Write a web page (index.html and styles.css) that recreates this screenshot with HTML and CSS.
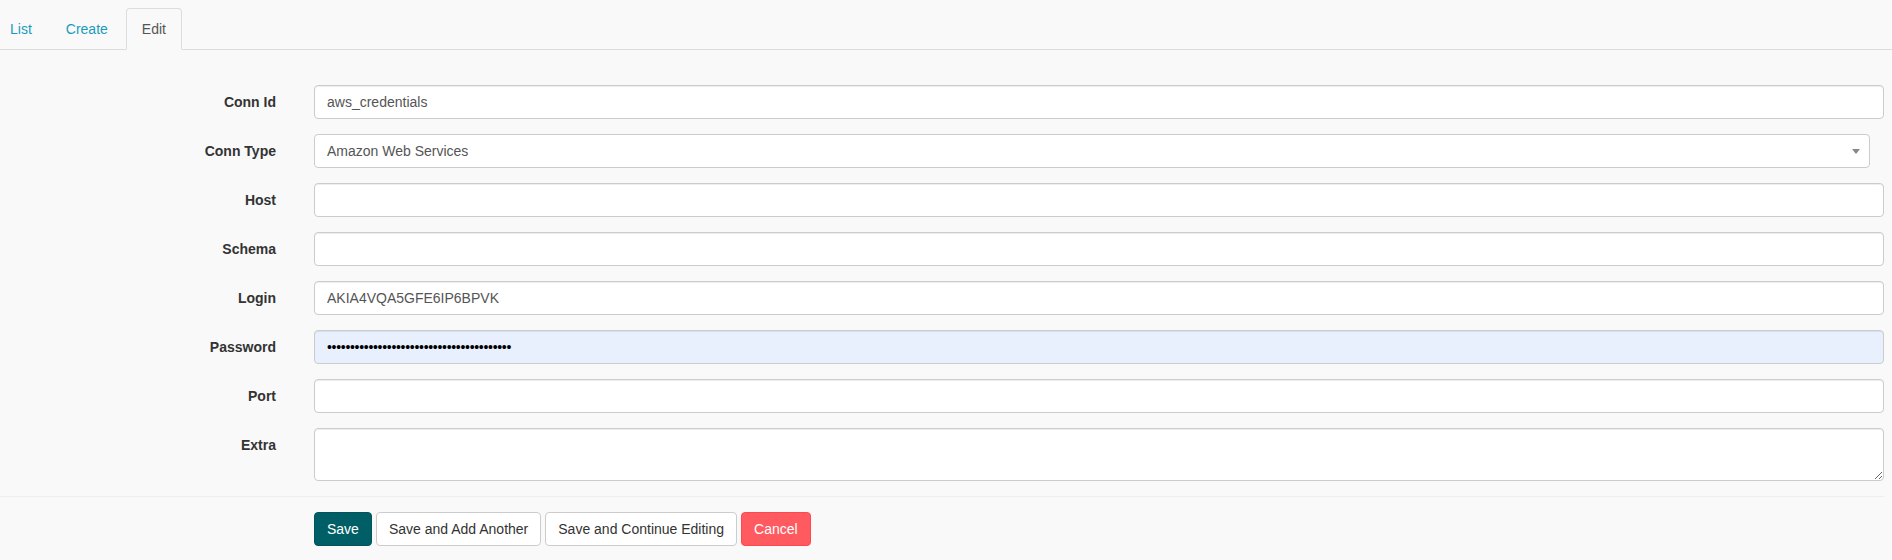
FILE: index.html
```html
<!DOCTYPE html>
<html>
<head>
<meta charset="utf-8">
<link rel="stylesheet" href="styles.css">
</head>
<body>
<ul class="tabs">
  <li class="tab"><a href="#">List</a></li>
  <li class="tab"><a href="#">Create</a></li>
  <li class="tab active"><a href="#">Edit</a></li>
</ul>
<form class="form">
  <div class="row">
    <label class="label">Conn Id</label>
    <input class="control" type="text" value="aws_credentials">
  </div>
  <div class="row">
    <label class="label">Conn Type</label>
    <div class="select">
      <span class="select-text">Amazon Web Services</span>
      <span class="arrow"></span>
    </div>
  </div>
  <div class="row">
    <label class="label">Host</label>
    <input class="control" type="text" value="">
  </div>
  <div class="row">
    <label class="label">Schema</label>
    <input class="control" type="text" value="">
  </div>
  <div class="row">
    <label class="label">Login</label>
    <input class="control" type="text" value="AKIA4VQA5GFE6IP6BPVK">
  </div>
  <div class="row">
    <label class="label">Password</label>
    <input class="control autofill" type="password" value="xxxxxxxxxxxxxxxxxxxxxxxxxxxxxxxxxxxxxxxx">
  </div>
  <div class="row">
    <label class="label">Port</label>
    <input class="control" type="text" value="">
  </div>
  <div class="row">
    <label class="label">Extra</label>
    <textarea class="control textarea"></textarea>
  </div>
  <hr class="divider">
  <div class="actions">
    <button type="button" class="btn btn-primary">Save</button>
    <button type="button" class="btn">Save and Add Another</button>
    <button type="button" class="btn">Save and Continue Editing</button>
    <button type="button" class="btn btn-danger">Cancel</button>
  </div>
</form>
</body>
</html>
```
FILE: styles.css
```css
* { box-sizing: border-box; }
html, body {
  margin: 0;
  padding: 0;
  background: #f9f9f9;
  font-family: "Liberation Sans", Arial, Helvetica, sans-serif;
  font-size: 14px;
  line-height: 20px;
  color: #333;
}
.tabs {
  list-style: none;
  margin: 8px 0 0 -6px;
  padding: 0;
  display: flex;
  border-bottom: 1px solid #ddd;
}
.tab {
  margin: 0 2px -1px 0;
}
.tab a {
  display: block;
  padding: 10px 15px;
  line-height: 20px;
  border: 1px solid transparent;
  border-radius: 4px 4px 0 0;
  color: #1a9bbd;
  text-decoration: none;
}
.tab.active a {
  color: #555;
  background: #f9f9f9;
  border-color: #ddd #ddd transparent #ddd;
}
.form {
  margin: 35px 8px 0 0;
}
.row {
  display: grid;
  grid-template-columns: 276px 1fr;
  column-gap: 38px;
  margin-bottom: 15px;
}
.label {
  font-weight: bold;
  text-align: right;
  padding-top: 7px;
  line-height: 20px;
  color: #333;
}
.control {
  display: block;
  width: 100%;
  height: 34px;
  padding: 6px 12px;
  font-family: "Liberation Sans", Arial, Helvetica, sans-serif;
  font-size: 14px;
  line-height: 20px;
  color: #555;
  background: #fff;
  border: 1px solid #ccc;
  border-radius: 4px;
  box-shadow: inset 0 1px 1px rgba(0,0,0,0.075);
  outline: none;
  margin: 0;
}
.autofill {
  background: #e8f0fe;
  color: #000;
  letter-spacing: -0.3px;
}
.textarea {
  height: 53px;
  resize: vertical;
}
.select {
  display: flex;
  align-items: center;
  justify-content: space-between;
  height: 34px;
  width: calc(100% - 14px);
  padding: 0 8px 0 12px;
  background: #fff;
  border: 1px solid #ccc;
  border-radius: 4px;
  color: #555;
}
.arrow {
  width: 0;
  height: 0;
  border-style: solid;
  border-width: 5px 4px 0 4px;
  border-color: #888 transparent transparent transparent;
  margin-right: 1px;
}
.divider {
  border: 0;
  border-top: 1px solid #eee;
  margin: 0 0 15px 0;
}
.actions {
  display: flex;
  gap: 4px;
  padding-left: 314px;
}
.btn {
  font-family: "Liberation Sans", Arial, Helvetica, sans-serif;
  font-size: 14px;
  line-height: 20px;
  padding: 6px 12px;
  border: 1px solid #ccc;
  border-radius: 4px;
  background: #fff;
  color: #333;
  margin: 0;
}
.btn-primary {
  background: #005f66;
  border-color: #00545a;
  color: #fff;
}
.btn-danger {
  background: #ff5a5f;
  border-color: #ff474d;
  color: #fff;
}
```
